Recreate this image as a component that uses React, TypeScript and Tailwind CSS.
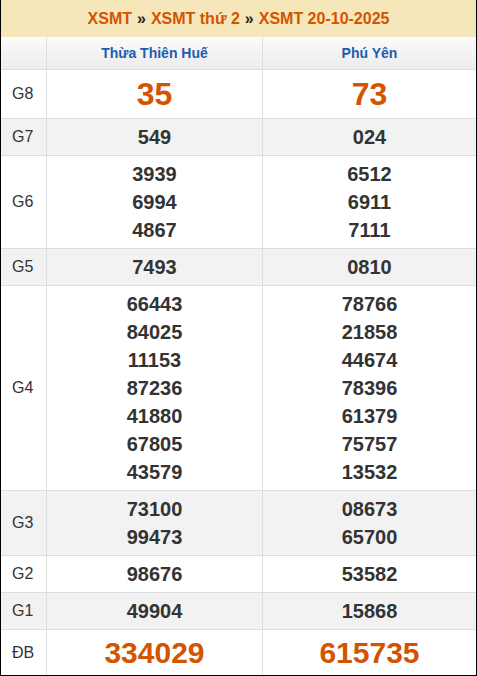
const rows: { label: string; a: string[]; b: string[]; big?: "g8" | "db"; shaded?: boolean }[] = [
  { label: "G8", a: ["35"], b: ["73"], big: "g8" },
  { label: "G7", a: ["549"], b: ["024"], shaded: true },
  { label: "G6", a: ["3939", "6994", "4867"], b: ["6512", "6911", "7111"] },
  { label: "G5", a: ["7493"], b: ["0810"], shaded: true },
  {
    label: "G4",
    a: ["66443", "84025", "11153", "87236", "41880", "67805", "43579"],
    b: ["78766", "21858", "44674", "78396", "61379", "75757", "13532"],
  },
  { label: "G3", a: ["73100", "99473"], b: ["08673", "65700"], shaded: true },
  { label: "G2", a: ["98676"], b: ["53582"] },
  { label: "G1", a: ["49904"], b: ["15868"], shaded: true },
  { label: "ĐB", a: ["334029"], b: ["615735"], big: "db" },
];

function Numbers({ items, big }: { items: string[]; big?: "g8" | "db" }) {
  if (big === "g8") {
    return <div className="text-[32px] leading-[40px] font-bold text-[#d35400]">{items[0]}</div>;
  }
  if (big === "db") {
    return <div className="text-[30px] leading-[36px] font-bold text-[#d35400]">{items[0]}</div>;
  }
  return (
    <div className="flex flex-col">
      {items.map((n, i) => (
        <div key={i} className="text-[20px] leading-[28px] font-bold text-[#333]">
          {n}
        </div>
      ))}
    </div>
  );
}

export default function App() {
  return (
    <div className="w-[477px] h-[676px] bg-white font-['Liberation_Sans',Arial,sans-serif]">
      <div className="border-x border-b border-black h-[676px] flex flex-col">
        <div className="h-[37px] bg-[#f6e7ba] flex items-center justify-center text-[16px] font-bold text-[#d35400]">
          <span>XSMT</span>
          <span className="text-[#222] mx-[5px]">»</span>
          <span>XSMT thứ 2</span>
          <span className="text-[#222] mx-[5px]">»</span>
          <span>XSMT 20-10-2025</span>
        </div>

        <div className="grid grid-cols-[45px_216px_1fr] h-[33px] bg-gradient-to-b from-[#fbfbfb] to-[#ececec] border-b border-[#dedede]">
          <div />
          <div className="border-l border-[#dedede] flex items-center justify-center text-[14px] font-bold text-[#1b5cb0]">
            Thừa Thiên Huế
          </div>
          <div className="border-l border-[#dedede] flex items-center justify-center text-[14px] font-bold text-[#1b5cb0]">
            Phú Yên
          </div>
        </div>

        {rows.map((r, i) => (
          <div
            key={r.label}
            className={`grid grid-cols-[45px_216px_1fr] ${r.shaded ? "bg-[#f2f2f2]" : "bg-white"} ${
              i < rows.length - 1 ? "border-b border-[#dedede]" : "flex-1"
            }`}
          >
            <div className="flex items-center pl-[11px] text-[16px] text-[#333]">{r.label}</div>
            <div className="border-l border-[#dedede] flex items-center justify-center text-center py-[4px]">
              <Numbers items={r.a} big={r.big} />
            </div>
            <div className="border-l border-[#dedede] flex items-center justify-center text-center py-[4px]">
              <Numbers items={r.b} big={r.big} />
            </div>
          </div>
        ))}
      </div>
    </div>
  );
}
